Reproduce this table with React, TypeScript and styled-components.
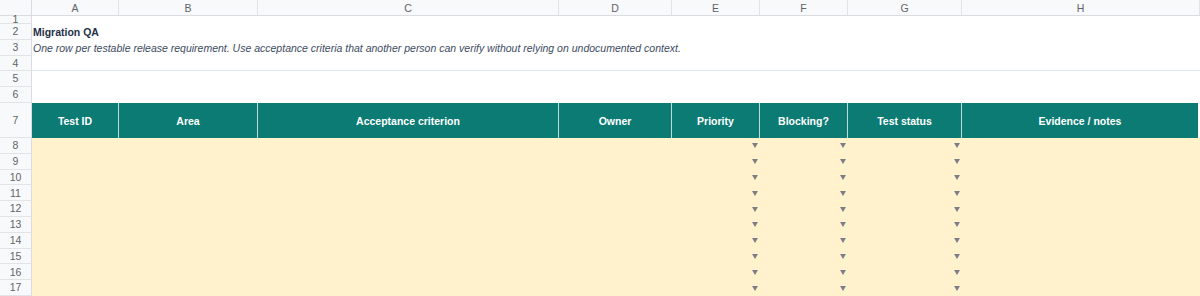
import React from 'react';
import styled, { createGlobalStyle } from 'styled-components';

const GlobalStyle = createGlobalStyle`
  html, body {
    margin: 0;
    padding: 0;
    background: #ffffff;
    font-family: "Liberation Sans", Arial, sans-serif;
  }
`;

const columns = [
  { key: 'A', width: 87, label: 'Test ID' },
  { key: 'B', width: 139, label: 'Area' },
  { key: 'C', width: 301, label: 'Acceptance criterion' },
  { key: 'D', width: 113, label: 'Owner' },
  { key: 'E', width: 88, label: 'Priority', dropdown: true },
  { key: 'F', width: 88, label: 'Blocking?', dropdown: true },
  { key: 'G', width: 114, label: 'Test status', dropdown: true },
  { key: 'H', width: 238, label: 'Evidence / notes' },
];

const dataRows = [8, 9, 10, 11, 12, 13, 14, 15, 16, 17];

const Sheet = styled.div`
  display: grid;
  width: 1200px;
  grid-template-columns: 32px ${columns.map((c) => `${c.width}px`).join(' ')};
  grid-template-rows: 16px 8px 16px 16px 15px 16px 16px 35px repeat(10, 15.8px);
  overflow: hidden;
`;

const Corner = styled.div`
  background: #f8f9fa;
  border-right: 1px solid #dadce0;
  border-bottom: 1px solid #dadce0;
`;

const ColHead = styled.div`
  background: #f8f9fa;
  border-right: 1px solid #e2e3e5;
  border-bottom: 1px solid #dadce0;
  color: #5f6368;
  font-size: 10.5px;
  display: flex;
  align-items: center;
  justify-content: center;
`;

const RowHead = styled.div`
  background: #f8f9fa;
  border-right: 1px solid #dadce0;
  border-bottom: 1px solid #e2e3e5;
  color: #5f6368;
  font-size: 10.5px;
  display: flex;
  align-items: center;
  justify-content: center;
  line-height: 1;
  overflow: visible;
`;

const TextRow = styled.div<{ $rule?: boolean }>`
  grid-column: 2 / -1;
  display: flex;
  align-items: center;
  padding-left: 1px;
  white-space: nowrap;
  border-bottom: ${({ $rule }) => ($rule ? '1px solid #e3e8ef' : 'none')};
`;

const Title = styled.span`
  font-size: 10.5px;
  font-weight: 700;
  color: #1f3048;
`;

const Subtitle = styled.span`
  font-size: 10.5px;
  font-style: italic;
  color: #3d4b5f;
`;

const HeadCell = styled.div<{ $last?: boolean }>`
  background: #0b7b74;
  color: #ffffff;
  font-size: 10.5px;
  font-weight: 700;
  display: flex;
  align-items: center;
  justify-content: center;
  border-right: ${({ $last }) => ($last ? '2px solid #ffffff' : '1px solid #b9ddd8')};
`;

const DataCell = styled.div`
  background: #fff2cc;
  display: flex;
  align-items: center;
  justify-content: flex-end;
  padding-right: 2px;
`;

const Arrow = styled.span`
  width: 0;
  height: 0;
  border-left: 3.5px solid transparent;
  border-right: 3.5px solid transparent;
  border-top: 5px solid #7a7f87;
`;

export default function App() {
  return (
    <>
      <GlobalStyle />
      <Sheet>
        <Corner />
        {columns.map((c) => (
          <ColHead key={c.key}>{c.key}</ColHead>
        ))}

        <RowHead>1</RowHead>
        <TextRow />

        <RowHead>2</RowHead>
        <TextRow>
          <Title>Migration QA</Title>
        </TextRow>

        <RowHead>3</RowHead>
        <TextRow>
          <Subtitle>
            One row per testable release requirement. Use acceptance criteria that another person can verify without
            relying on undocumented context.
          </Subtitle>
        </TextRow>

        <RowHead>4</RowHead>
        <TextRow $rule />

        <RowHead>5</RowHead>
        <TextRow />

        <RowHead>6</RowHead>
        <TextRow />

        <RowHead>7</RowHead>
        {columns.map((c, i) => (
          <HeadCell key={c.key} $last={i === columns.length - 1}>
            {c.label}
          </HeadCell>
        ))}

        {dataRows.map((n) => (
          <React.Fragment key={n}>
            <RowHead>{n}</RowHead>
            {columns.map((c) => (
              <DataCell key={c.key}>{c.dropdown && <Arrow />}</DataCell>
            ))}
          </React.Fragment>
        ))}
      </Sheet>
    </>
  );
}
